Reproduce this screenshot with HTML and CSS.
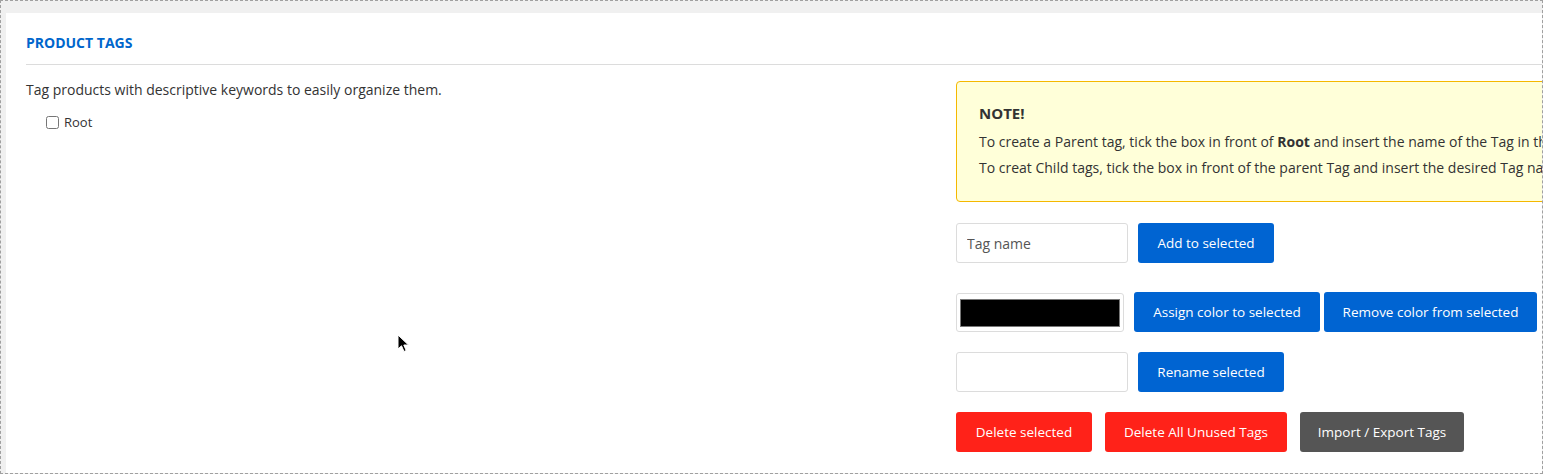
FILE: index.html
```html
<!DOCTYPE html>
<html lang="en">
<head>
    <meta charset="UTF-8">
    <meta name="viewport" content="width=device-width, initial-scale=1.0">
    <title>Product Tags</title>
    <link rel="stylesheet" href="styles.css">
</head>
<body>
    <div class="frame">
        <div class="panel">
            <h3 class="panel-title">PRODUCT TAGS</h3>
            <div class="panel-body">
                <div class="tree">
                    <p class="intro">Tag products with descriptive keywords to easily organize them.</p>
                    <label class="tree-node"><input type="checkbox" name="tag_root"> Root</label>
                </div>
                <div class="tools">
                    <div class="note">
                        <h4>NOTE!</h4>
                        <p>To create a Parent tag, tick the box in front of <b>Root</b> and insert the name of the Tag in the field below and press Add to selected.</p>
                        <p>To creat Child tags, tick the box in front of the parent Tag and insert the desired Tag name in the field below.</p>
                    </div>

                    <div class="row row-add">
                        <input type="text" class="field" placeholder="Tag name">
                        <button class="btn btn-blue">Add to selected</button>
                    </div>
                    <div class="row">
                        <input type="color" class="field color-field" value="#000000">
                        <button class="btn btn-blue btn-assign">Assign color to selected</button>
                        <button class="btn btn-blue btn-remove">Remove color from selected</button>
                    </div>
                    <div class="row">
                        <input type="text" class="field">
                        <button class="btn btn-blue btn-rename">Rename selected</button>
                    </div>
                    <div class="row row-danger">
                        <button class="btn btn-red">Delete selected</button>
                        <button class="btn btn-red">Delete All Unused Tags</button>
                        <button class="btn btn-gray">Import / Export Tags</button>
                    </div>
                </div>
            </div>
        </div>
        <!-- mouse pointer from the capture -->
        <svg class="pointer" width="13" height="19" viewBox="0 0 13 19">
            <path d="M1 1 L1 15 L4.5 11.8 L7 17.5 L9.2 16.5 L6.8 11 L11.5 11 Z" fill="#000" stroke="#fff" stroke-width="1"/>
        </svg>
    </div>
</body>
</html>
```

FILE: styles.css
```css
*{
    margin: 0;
    padding: 0;
    box-sizing: border-box;
}
body{
    font-family: "Open Sans", "Liberation Sans", sans-serif;
    font-size: 14px;
    color: #333;
    background: #f0f0f0;
}
.frame{
    position: relative;
    height: 474px;
    padding: 12px 0 0 5px;
    border: 1px dashed #a0a0a0;
    background: #f0f0f0;
    overflow: hidden;
}
.panel{
    width: 1900px;
    height: 100%;
    background: #fff;
    padding: 0 20px;
}
.panel-title{
    font-size: 14px;
    font-weight: 700;
    color: #0066cc;
    line-height: 18px;
    padding: 21px 0 12px;
    border-bottom: 1px solid #dcdcdc;
}
.panel-body{
    display: grid;
    grid-template-columns: 930px 1fr;
}
.intro{
    line-height: 18px;
    padding-top: 16px;
}
.tree-node{
    display: flex;
    align-items: center;
    gap: 5px;
    margin: 15px 0 0 20px;
    font-size: 13px;
    line-height: 16px;
}
.tree-node input{
    width: 13px;
    height: 13px;
    margin: 0;
}
.tools{
    padding-top: 16px;
}
.note{
    background: #ffffd9;
    border: 1px solid #f5b800;
    border-radius: 4px;
    padding: 21px 22px 20px;
    margin-bottom: 21px;
}
.note h4{
    font-size: 15px;
    font-weight: 700;
    line-height: 20px;
    margin-bottom: 6px;
}
.note p{
    line-height: 26px;
}
.row{
    display: flex;
    align-items: center;
    margin-bottom: 20px;
}
.row-add{
    margin-bottom: 29px;
}
.field{
    width: 172px;
    height: 40px;
    border: 1px solid #dcdcdc;
    border-radius: 3px;
    padding: 0 10px;
    font-family: inherit;
    font-size: 14px;
    color: #333;
    background: #fff;
    margin-right: 10px;
}
.field::placeholder{
    color: #555;
}
.color-field{
    width: 168px;
    height: 39px;
    padding: 5px 3px 4px;
    cursor: pointer;
}
.color-field::-webkit-color-swatch-wrapper{
    padding: 0;
}
.color-field::-webkit-color-swatch{
    border: 1px solid #777;
    border-radius: 0;
}
.btn{
    height: 40px;
    padding: 0 10px;
    border: none;
    border-radius: 3px;
    color: #fff;
    font-family: inherit;
    font-size: 13.5px;
    cursor: pointer;
}
.btn-blue{
    background: #0064d2;
    width: 136px;
}
.btn-assign{
    width: 186px;
    margin-right: 4px;
}
.btn-remove{
    width: 213px;
}
.btn-rename{
    width: 146px;
}
.btn-red{
    background: #ff2219;
}
.btn-gray{
    background: #555;
}
.row-danger .btn{
    margin-right: 13px;
}
.row-danger .btn:first-child{
    width: 136px;
}
.row-danger .btn:nth-child(2){
    width: 182px;
}
.row-danger .btn:nth-child(3){
    width: 164px;
}
.pointer{
    position: absolute;
    left: 396px;
    top: 333px;
}
```
